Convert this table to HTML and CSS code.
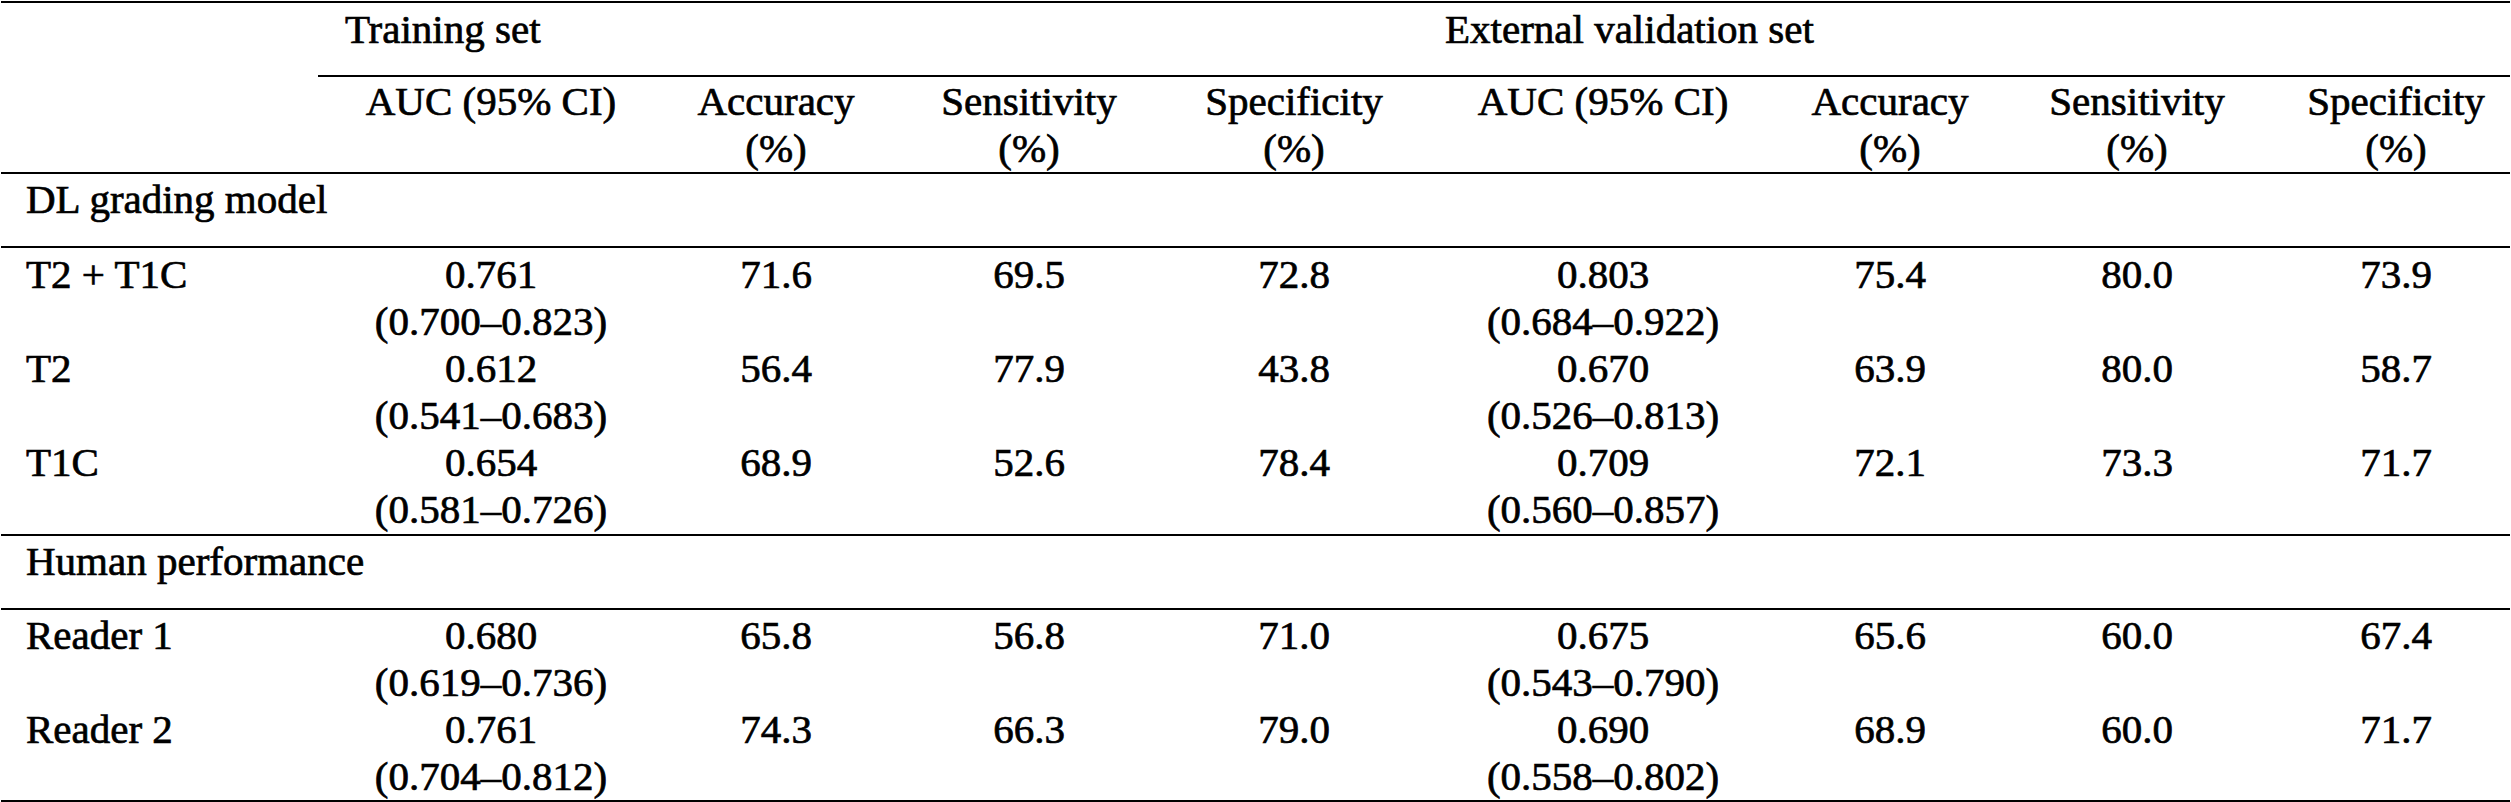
FILE: index.html
```html
<!DOCTYPE html>
<html lang="en">
<head>
<meta charset="utf-8">
<title>Grading performance</title>
<link rel="stylesheet" href="styles.css">
</head>
<body>
<table class="results">
  <colgroup>
    <col class="c-label">
    <col class="c-auc">
    <col class="c-acc">
    <col class="c-sen">
    <col class="c-spe">
    <col class="c-auc2">
    <col class="c-acc2">
    <col class="c-sen2">
    <col class="c-spe2">
  </colgroup>
  <thead>
    <tr class="group-row">
      <th class="stub" rowspan="2"></th>
      <th class="group" colspan="4">Training set</th>
      <th class="group" colspan="4">External validation set</th>
    </tr>
    <tr class="metric-row">
      <th>AUC (95% CI)</th>
      <th>Accuracy<br>(%)</th>
      <th>Sensitivity<br>(%)</th>
      <th>Specificity<br>(%)</th>
      <th>AUC (95% CI)</th>
      <th>Accuracy<br>(%)</th>
      <th>Sensitivity<br>(%)</th>
      <th>Specificity<br>(%)</th>
    </tr>
  </thead>
  <tbody>
    <tr class="section"><td colspan="9">DL grading model</td></tr>
    <tr class="first">
      <td class="label">T2 + T1C</td>
      <td>0.761<br>(0.700–0.823)</td><td>71.6</td><td>69.5</td><td>72.8</td>
      <td>0.803<br>(0.684–0.922)</td><td>75.4</td><td>80.0</td><td>73.9</td>
    </tr>
    <tr>
      <td class="label">T2</td>
      <td>0.612<br>(0.541–0.683)</td><td>56.4</td><td>77.9</td><td>43.8</td>
      <td>0.670<br>(0.526–0.813)</td><td>63.9</td><td>80.0</td><td>58.7</td>
    </tr>
    <tr class="last">
      <td class="label">T1C</td>
      <td>0.654<br>(0.581–0.726)</td><td>68.9</td><td>52.6</td><td>78.4</td>
      <td>0.709<br>(0.560–0.857)</td><td>72.1</td><td>73.3</td><td>71.7</td>
    </tr>
    <tr class="section"><td colspan="9">Human performance</td></tr>
    <tr class="first human">
      <td class="label">Reader 1</td>
      <td>0.680<br>(0.619–0.736)</td><td>65.8</td><td>56.8</td><td>71.0</td>
      <td>0.675<br>(0.543–0.790)</td><td>65.6</td><td>60.0</td><td>67.4</td>
    </tr>
    <tr class="end">
      <td class="label">Reader 2</td>
      <td>0.761<br>(0.704–0.812)</td><td>74.3</td><td>66.3</td><td>79.0</td>
      <td>0.690<br>(0.558–0.802)</td><td>68.9</td><td>60.0</td><td>71.7</td>
    </tr>
  </tbody>
</table>
</body>
</html>
```
FILE: styles.css
```css
html, body {
  margin: 0;
  padding: 0;
  background: #ffffff;
}

body {
  overflow: hidden;
}

.results {
  margin: 1px 0 0 1px;
  width: 2509px;
  table-layout: fixed;
  border-collapse: separate;
  border-spacing: 0;
  border-top: 2px solid #000;
  font-family: "Liberation Serif", "Times New Roman", Times, serif;
  font-size: 41px;
  line-height: 47px;
  color: #000;
  -webkit-text-stroke: 0.7px #000;
}

.c-label { width: 317px; }
.c-auc { width: 346px; }
.c-acc { width: 224px; }
.c-sen { width: 282px; }
.c-spe { width: 248px; }
.c-auc2 { width: 370px; }
.c-acc2 { width: 204px; }
.c-sen2 { width: 290px; }
.c-spe2 { width: 228px; }

.results th,
.results td {
  padding: 0;
  font-weight: normal;
  text-align: center;
  vertical-align: top;
  white-space: nowrap;
}

.results .stub {
  border-bottom: 2px solid #000;
}

.group-row .group {
  text-align: left;
  padding: 3px 0 22px 27px;
  border-bottom: 2px solid #000;
}

.metric-row th {
  padding-top: 1px;
  border-bottom: 2px solid #000;
}

.section td {
  text-align: left;
  padding: 2px 0 23px 25px;
  border-bottom: 2px solid #000;
}

.results td.label {
  text-align: left;
  padding-left: 25px;
}

.first td {
  padding-top: 3px;
}

.first.human td {
  padding-top: 2px;
}

.last td {
  padding-bottom: 1px;
  border-bottom: 2px solid #000;
}

.end td {
  border-bottom: 2px solid #000;
}
```
